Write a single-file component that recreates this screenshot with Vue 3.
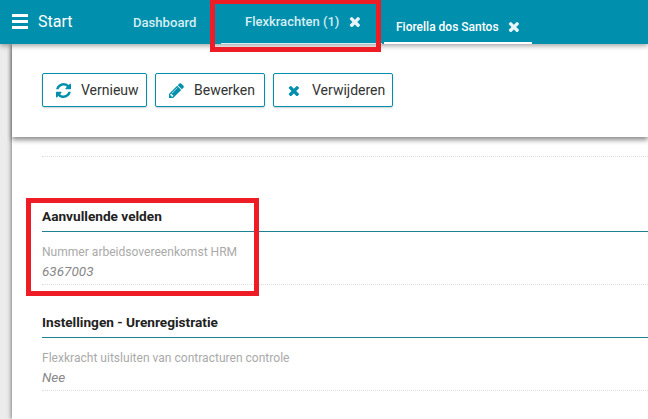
<template>
  <div class="page">
    <header class="topbar">
      <div class="brand">
        <span class="burger"><i></i><i></i><i></i></span>
        <span class="start">Start</span>
      </div>
      <nav class="tabs">
        <a class="tab dash">Dashboard</a>
        <a class="tab flex">Flexkrachten (1)<svg class="x" viewBox="214 256 1276 1280"><path :d="times" /></svg></a>
        <a class="tab person">Fiorella dos Santos<svg class="x" viewBox="214 256 1276 1280"><path :d="times" /></svg></a>
      </nav>
    </header>
    <main class="main">
      <section class="actions">
        <button class="btn b1">
          <svg class="ic" viewBox="128 128 1536 1536"><path :d="refresh" /></svg>
          Vernieuw
        </button>
        <button class="btn b2">
          <svg class="ic" viewBox="128 128 1536 1536"><path :d="pencil" /></svg>
          Bewerken
        </button>
        <button class="btn b3">
          <svg class="ic small" viewBox="214 256 1276 1280"><path :d="times" /></svg>
          Verwijderen
        </button>
      </section>
      <div class="content">
        <div class="dotted first"></div>
        <section class="group g1">
          <h3>Aanvullende velden</h3>
          <div class="field">
            <div class="label">Nummer arbeidsovereenkomst HRM</div>
            <div class="value">6367003</div>
          </div>
        </section>
        <section class="group g2">
          <h3>Instellingen - Urenregistratie</h3>
          <div class="field">
            <div class="label">Flexkracht uitsluiten van contracturen controle</div>
            <div class="value">Nee</div>
          </div>
        </section>
      </div>
    </main>
    <div class="mark m1"></div>
    <div class="mark m2"></div>
  </div>
</template>

<script setup>
const times = "M1490 1322q0 40-28 68l-136 136q-28 28-68 28t-68-28l-294-294-294 294q-28 28-68 28t-68-28l-136-136q-28-28-28-68t28-68l294-294-294-294q-28-28-28-68t28-68l136-136q28-28 68-28t68 28l294 294 294-294q28-28 68-28t68 28l136 136q28 28 28 68t-28 68l-294 294 294 294q28 28 28 68z";
const refresh = "M1639 1056q0 5-1 7-64 268-268 434.5t-478 166.5q-146 0-282.5-55t-243.5-157l-129 129q-19 19-45 19t-45-19-19-45v-448q0-26 19-45t45-19h448q26 0 45 19t19 45-19 45l-137 137q71 66 161 102t187 36q134 0 250-65t186-179q11-17 53-117 8-23 30-23h192q13 0 22.5 9.5t9.5 22.5zm25-800v448q0 26-19 45t-45 19h-448q-26 0-45-19t-19-45 19-45l138-138q-148-137-349-137-134 0-250 65t-186 179q-11 17-53 117-8 23-30 23h-199q-13 0-22.5-9.5t-9.5-22.5v-7q65-268 270-434.5t480-166.5q146 0 284 55.5t245 156.5l130-129q19-19 45-19t45 19 19 45z";
const pencil = "M491 1536l91-91-235-235-91 91v107h128v128h107zm523-928q0-22-22-22-10 0-17 7l-542 542q-7 7-7 17 0 22 22 22 10 0 17-7l542-542q7-7 7-17zm-54-192l416 416-832 832h-416v-416zm683 96q0 53-37 90l-166 166-416-416 166-165q36-38 90-38 53 0 91 38l235 234q37 39 37 91z";
</script>

<style>
html, body { margin: 0; background: #ececec; overflow: hidden; }
</style>

<style scoped>
.page {
  position: relative;
  width: 648px;
  height: 419px;
  overflow: hidden;
  background: #ececec;
  font-family: Roboto, "Liberation Sans", sans-serif;
}
.topbar {
  position: relative;
  z-index: 2;
  height: 44px;
  background: #008fac;
  box-shadow: 0 2px 5px rgba(0, 0, 0, .35);
  display: flex;
  color: #fff;
}
.brand {
  display: flex;
  align-items: center;
  width: 133px;
  padding-left: 12px;
  box-sizing: border-box;
  height: 42px;
}
.burger { display: flex; flex-direction: column; gap: 3px; width: 16px; margin-right: 10px; }
.burger i { display: block; height: 3px; background: #fff; }
.start { font-size: 16px; }
.tabs { display: flex; }
.tab {
  display: flex;
  align-items: center;
  font-size: 13px;
  font-weight: 500;
  color: #d6eef3;
  box-sizing: border-box;
}
.dash { width: 88px; height: 44px; font-size: 13.1px; }
.flex {
  width: 161px;
  height: 44px;
  padding-left: 24px;
  border-bottom: 1px solid #d6eef3;
}
.person {
  width: 148px;
  height: 44px;
  padding: 11px 0 0 12px;
  font-size: 12px;
  color: #fff;
  border-bottom: 2px solid #fff;
  margin-left: 2px;
}
.x { width: 11px; height: 11px; fill: #e8f5f8; margin-left: 10px; }
.person .x { margin-left: 9px; }
.main {
  margin-left: 12px;
  height: 375px;
  background: #fff;
  box-shadow: -1px 0 4px rgba(0, 0, 0, .45);
}
.actions {
  position: relative;
  height: 93px;
  padding: 29px 0 0 30px;
  box-sizing: border-box;
  display: flex;
  align-items: flex-start;
  gap: 8px;
  box-shadow: 0 3px 5px rgba(0, 0, 0, .45);
}
.btn {
  height: 34px;
  box-sizing: border-box;
  display: flex;
  align-items: center;
  background: #fff;
  border: 1px solid #008fac;
  border-radius: 2px;
  box-shadow: 0 1px 2px rgba(0, 0, 0, .2);
  font: 400 14px Roboto, "Liberation Sans", sans-serif;
  color: #333;
  padding: 0;
}
.b1 { width: 105px; padding-left: 13px; }
.b2 { width: 110px; padding-left: 13px; }
.b3 { width: 120px; padding-left: 14px; }
.ic { width: 15px; height: 15px; fill: #008fac; margin-right: 10px; }
.ic.small { width: 11px; height: 11px; margin-right: 13px; }
.content { padding: 19px 0 0 30px; }
.dotted.first { border-top: 1px dotted #ddd; }
.group h3 {
  margin: 0;
  font-size: 13.65px;
  font-weight: 700;
  color: #222;
  height: 23px;
  line-height: 16px;
  border-bottom: 1px solid #1f7f93;
  box-sizing: content-box;
}
.g1 { margin-top: 51px; }
.g2 { margin-top: 29px; }
.field { border-bottom: 1px dotted #ddd; height: 53px; box-sizing: border-box; padding-top: 12px; }
.label { font-size: 12.05px; line-height: 16px; color: #aaa; }
.value { font-size: 13.5px; line-height: 16px; margin-top: 3px; font-style: italic; color: #888; }
.mark { position: absolute; z-index: 5; border: 5px solid #ee1c25; box-sizing: border-box; }
.m1 { left: 210px; top: 0; width: 171px; height: 52px; border-top-width: 4px; }
.m2 { left: 26px; top: 198px; width: 233px; height: 98px; }
</style>
